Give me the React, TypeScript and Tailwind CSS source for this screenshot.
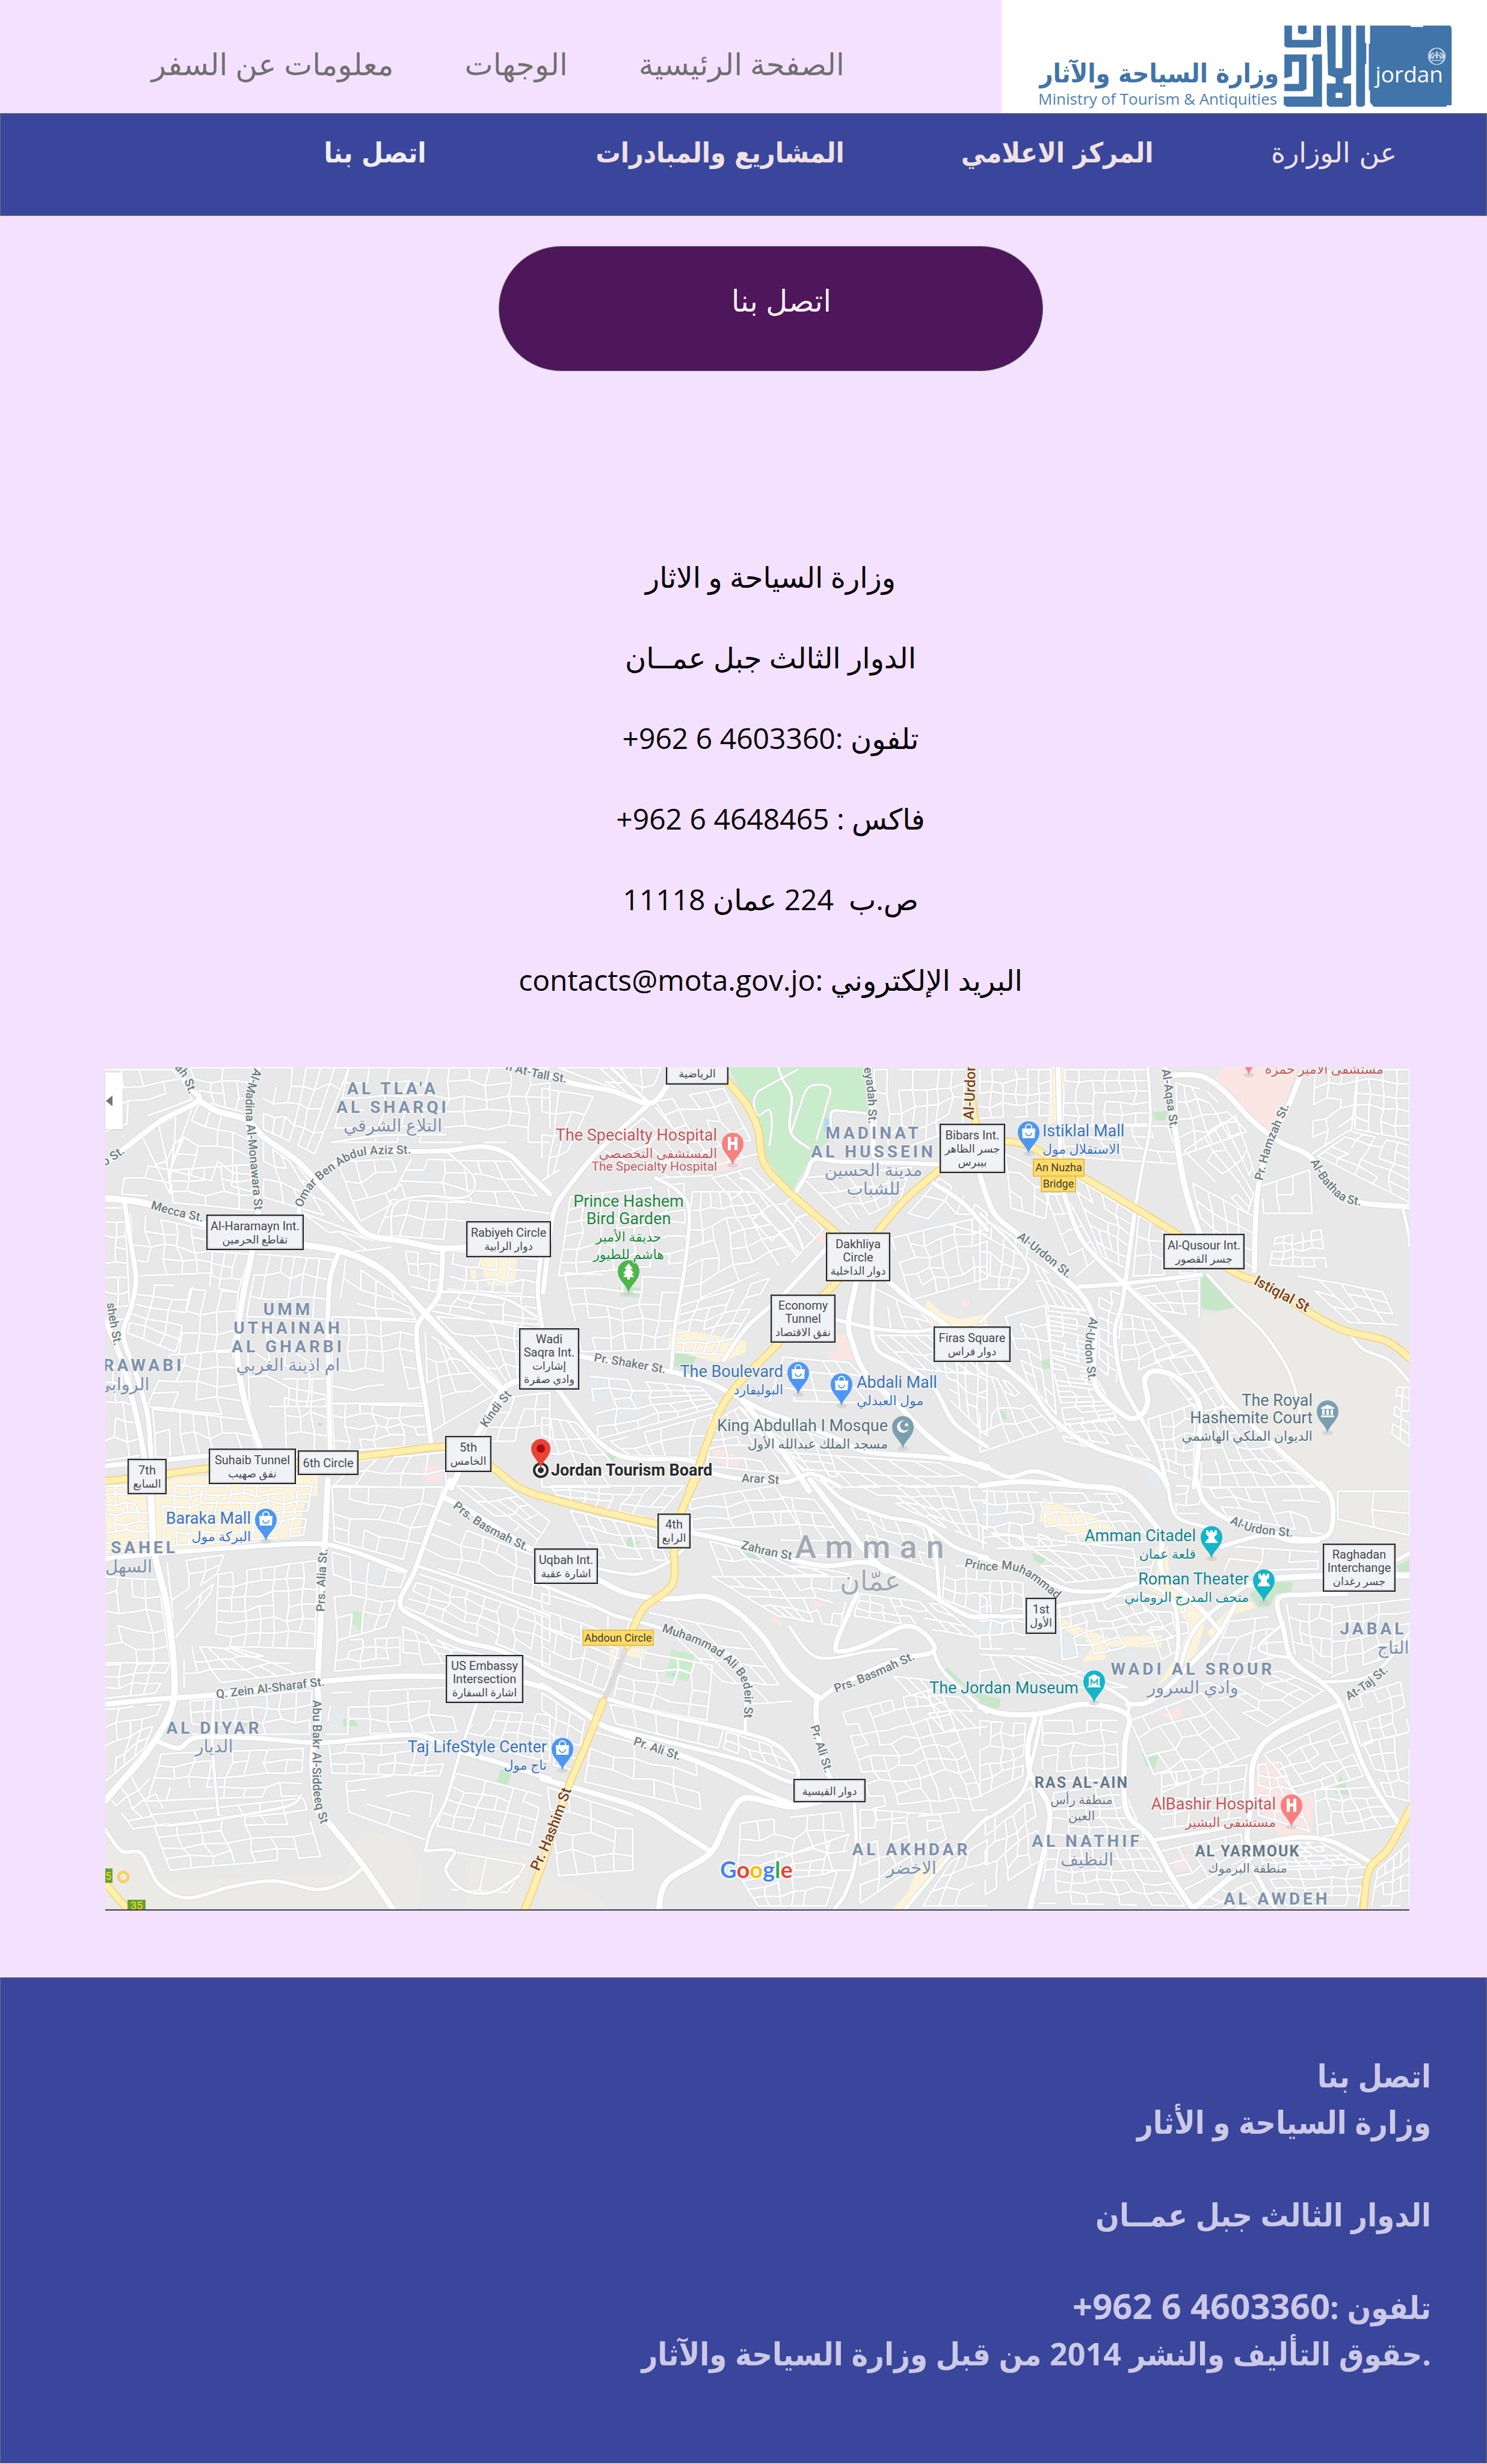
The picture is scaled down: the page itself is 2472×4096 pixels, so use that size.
import type { ReactNode } from "react";

type Point = [number, number];
type Sheet = "A1" | "B1" | "C1" | "A2" | "B2" | "C2";

const SHEETS: Record<Sheet, { x: number; y: number; sx: number; sy: number }> = {
  A1: { x: -1, y: -10, sx: 0.4721, sy: 0.4516 },
  B1: { x: 726, y: -10, sx: 0.4721, sy: 0.4516 },
  C1: { x: 1454, y: -10, sx: 0.4721, sy: 0.4516 },
  A2: { x: -1, y: 691, sx: 0.4721, sy: 0.4598 },
  B2: { x: 726, y: 691, sx: 0.4721, sy: 0.4598 },
  C2: { x: 1454, y: 691, sx: 0.4721, sy: 0.4598 },
};

const project = (s: Sheet, [x, y]: Point): Point => [
  Math.round(SHEETS[s].x + x * SHEETS[s].sx),
  Math.round(SHEETS[s].y + y * SHEETS[s].sy),
];

const parse = (list: string): Point[] =>
  list.split(" ").map((pair) => pair.split(",").map(Number) as Point);

/* Catmull-Rom spline through the given points */
const curve = (p: Point[]) => {
  let d = `M${p[0][0]} ${p[0][1]}`;
  for (let i = 0; i < p.length - 1; i++) {
    const a = p[i - 1] ?? p[i];
    const b = p[i];
    const c = p[i + 1];
    const e = p[i + 2] ?? c;
    d += `C${b[0] + (c[0] - a[0]) / 6} ${b[1] + (c[1] - a[1]) / 6} ${c[0] - (e[0] - b[0]) / 6} ${c[1] - (e[1] - b[1]) / 6} ${c[0]} ${c[1]}`;
  }
  return d;
};
const roadPath = (s: Sheet, list: string) => curve(parse(list).map((p) => project(s, p)));
const areaPath = (s: Sheet, list: string) =>
  "M" + parse(list).map((p) => project(s, p).join(" ")).join("L") + "Z";

/* Neighbourhood streets: four corners, then the number of columns and rows */
const noise = (n: number) => {
  const v = Math.sin(n * 12.9898) * 43758.5453;
  return v - Math.floor(v);
};
const blockPath = (s: Sheet, q: number[], seed: number) => {
  const [x1, y1, x2, y2, x3, y3, x4, y4, cols, rows] = q;
  const node = (i: number, j: number): string => {
    const edge = i === 0 || j === 0 || i === cols || j === rows;
    const k = seed * 101 + i * 17 + j * 31;
    const u = i / cols + (edge ? 0 : ((noise(k) - 0.5) * 0.35) / cols);
    const v = j / rows + (edge ? 0 : ((noise(k + 5) - 0.5) * 0.5) / rows);
    const x = (1 - u) * (1 - v) * x1 + u * (1 - v) * x2 + u * v * x3 + (1 - u) * v * x4;
    const y = (1 - u) * (1 - v) * y1 + u * (1 - v) * y2 + u * v * y3 + (1 - u) * v * y4;
    return project(s, [x, y]).join(" ");
  };
  let d = "";
  for (let i = 0; i <= cols; i++)
    for (let j = 0; j <= rows; j++) {
      if (i < cols && noise(seed * 7 + i * 3.1 + j * 5.7) > 0.12) d += `M${node(i, j)}L${node(i + 1, j)}`;
      if (j < rows && noise(seed * 9 + i * 4.3 + j * 2.9) > 0.22) d += `M${node(i, j)}L${node(i, j + 1)}`;
    }
  return d;
};

const AREAS: [Sheet, string, string][] = [
  ["B1", "#c9edcb", "655,20 1130,20 1160,190 1020,180 1012,290 950,350 880,480 845,440 780,340 740,190"],
  ["C1", "#ebeae6", "850,780 940,775 1040,850 1280,1010 1440,1100 1513,1200 1513,1600 1210,1600 1000,1385 860,1230 765,1060 780,940 900,905"],
  ["C2", "#ebeae6", "1200,-20 1520,-20 1520,250 1240,190 1240,60"],
  ["C1", "#c7e7c8", "780,785 800,780 905,905 830,922 780,910"],
  ["C1", "#c7e7c8", "610,188 665,182 650,220 615,218"],
  ["C1", "#c7e7c8", "215,1105 262,1090 265,1125 220,1135"],
  ["C1", "#c7e7c8", "65,1283 92,1295 95,1325 75,1310"],
  ["C1", "#fbe6e4", "860,20 1120,20 1040,258 990,250 930,190 822,70"],
  ["C1", "#fbe6e4", "408,705 442,680 436,728"],
  ["C1", "#fcf4da", "245,20 300,20 295,210 240,235"],
  ["C1", "#e5eaee", "100,960 150,950 168,1040 150,1045"],
  ["C1", "#e5eaee", "565,1500 600,1490 650,1560 600,1568"],
  ["B1", "#fbe6e4", "958,655 1000,620 1000,685"],
  ["B1", "#fbe6e4", "1035,1010 1070,1005 1100,1100 1010,1100 1010,1070 1045,1070"],
  ["B1", "#fbe6e4", "605,1425 702,1455 690,1495 595,1470"],
  ["B1", "#fbe6e4", "600,360 700,345 710,385 620,405"],
  ["B1", "#fbe6e4", "1478,880 1505,880 1495,905 1478,900"],
  ["B1", "#c7e7c8", "470,1065 545,1090 520,1150 465,1120"],
  ["B1", "#c7e7c8", "272,830 345,835 340,870 275,865"],
  ["B1", "#c7e7c8", "215,1460 235,1440 262,1455 250,1475"],
  ["B1", "#fcf4da", "450,980 720,1030 715,1075 620,1110 440,1060"],
  ["B1", "#fcf4da", "1360,880 1410,930 1470,950 1568,930 1568,1000 1400,980 1330,940"],
  ["B1", "#e5eaee", "175,1170 245,1150 250,1200 215,1260 175,1230"],
  ["B1", "#e5eaee", "275,1240 365,1260 350,1320 245,1290"],
  ["B1", "#e5eaee", "1360,590 1430,610 1420,640 1365,625"],
  ["B1", "#e5eaee", "1380,1110 1440,1110 1400,1200 1345,1150"],
  ["B1", "#aed8fb", "995,210 1010,212 1008,262 994,262"],
  ["A1", "#fcf4da", "1320,725 1450,725 1445,825 1350,825 1330,770"],
  ["A1", "#fcf4da", "1285,770 1305,765 1310,822 1298,825"],
  ["A1", "#fcf4da", "250,1530 750,1510 750,1600 150,1600"],
  ["A1", "#fbe6e4", "1120,1480 1190,1500 1185,1550 1120,1540"],
  ["A1", "#aed8fb", "753,1333 765,1333 765,1342 753,1342"],
  ["A2", "#fcf4da", "0,-10 735,-10 700,95 690,195 250,250 0,275"],
  ["A2", "#c9edcb", "873,462 925,475 895,535 873,505"],
  ["A2", "#c7e7c8", "838,855 880,855 893,878 840,880"],
  ["A2", "#c7e7c8", "482,857 502,855 502,880 490,880"],
  ["A2", "#c7e7c8", "1395,1035 1435,1045 1420,1095 1380,1085"],
  ["A2", "#e5eaee", "905,330 950,335 940,400 902,395"],
  ["A2", "#e5eaee", "558,790 592,790 590,835 560,830"],
  ["A2", "#e5eaee", "803,820 845,825 825,885 803,890"],
  ["A2", "#ebeae6", "0,1300 150,1345 200,1440 600,1425 850,1420 890,1290 940,1260 1060,1290 1120,1400 1100,1540 0,1540"],
  ["A2", "#ebeae6", "1290,1360 1360,1340 1500,1340 1480,1540 1270,1540"],
  ["B2", "#ebeae6", "-10,1410 180,1480 240,1540 -10,1540"],
  ["B2", "#c9edcb", "455,602 535,622 515,718 437,700"],
  ["B2", "#aed8fb", "460,688 478,690 477,700 460,698"],
  ["B2", "#c7e7c8", "307,185 328,185 328,212 348,212 320,242 295,230"],
  ["B2", "#c7e7c8", "718,252 778,268 775,288 715,272"],
  ["B2", "#c7e7c8", "1425,665 1500,740 1568,770 1568,810 1480,730 1420,680"],
  ["B2", "#fbe6e4", "812,480 830,478 850,520 810,500"],
  ["B2", "#fbe6e4", "960,425 982,430 978,447 958,445"],
  ["B2", "#fbe6e4", "1455,1140 1478,1155 1465,1170 1448,1158"],
  ["B2", "#e5eaee", "1505,490 1568,490 1568,545 1505,530"],
  ["B2", "#fcf4da", "240,600 270,590 255,660 238,665"],
  ["B2", "#fcf4da", "300,595 370,600 360,640 290,620"],
  ["B2", "#fcf4da", "1420,1340 1460,1330 1270,1540 1235,1540"],
  ["B2", "#fcf4da", "1330,1380 1420,1385 1330,1470 1290,1470"],
  ["C2", "#fcf4da", "220,55 440,140 465,160 455,235 210,140"],
  ["C2", "#fcf4da", "550,330 660,330 720,390 800,480 760,620 620,740 700,620 740,520 670,420 560,370"],
  ["C2", "#fcf4da", "270,480 390,540 460,560 640,550 640,595 450,590 440,640 360,645 400,590 280,520"],
  ["C2", "#fcf4da", "620,230 660,230 665,330 620,330"],
  ["C2", "#fcf4da", "900,430 960,430 970,450 880,480 820,570 800,540"],
  ["C2", "#ebe7e2", "720,160 780,150 850,250 990,240 985,290 830,310 720,300"],
  ["C2", "#c7e7c8", "950,400 1010,370 1050,358 1100,358 1098,395 1040,400 1020,445 980,450"],
  ["C2", "#c7e7c8", "185,255 235,275 215,295 190,280"],
  ["C2", "#c7e7c8", "0,765 75,780 65,815 0,805"],
  ["C2", "#c7e7c8", "1465,300 1520,275 1520,320 1475,320"],
  ["C2", "#c7e7c8", "570,975 630,990 615,1035 585,1025"],
  ["C2", "#c7e7c8", "1268,1055 1310,1130 1250,1120"],
  ["C2", "#fbe6e4", "640,840 700,810 715,835 690,858"],
  ["C2", "#fbe6e4", "970,1010 1040,1000 1070,1080 1130,1135 1175,1130 1168,1270 1060,1280 965,1150"],
  ["C2", "#fbe6e4", "680,1360 740,1340 725,1400 685,1390"],
  ["C2", "#e5eaee", "10,60 95,65 80,150 10,140"],
  ["C2", "#e5eaee", "290,550 375,560 360,625 285,615"],
  ["C2", "#e5eaee", "0,490 75,495 60,565 0,550"],
  ["C2", "#e5eaee", "515,605 555,610 550,670 510,650"],
];

const BLOCKS: [Sheet, number[]][] = [
  ["A1", [0, 30, 240, 30, 310, 140, 0, 260, 4, 3]],
  ["A1", [300, 25, 530, 25, 500, 190, 350, 150, 4, 3]],
  ["A1", [560, 25, 860, 25, 740, 340, 560, 250, 6, 4]],
  ["A1", [860, 25, 1568, 25, 1568, 300, 800, 300, 10, 5]],
  ["A1", [330, 160, 500, 225, 520, 480, 230, 400, 4, 4]],
  ["A1", [130, 270, 310, 170, 230, 400, 230, 490, 3, 2]],
  ["A1", [80, 370, 230, 400, 240, 500, 60, 490, 2, 2]],
  ["A1", [240, 400, 520, 380, 530, 550, 240, 520, 5, 3]],
  ["A1", [560, 300, 680, 390, 840, 590, 560, 500, 4, 3]],
  ["A1", [700, 560, 930, 650, 1050, 680, 880, 700, 4, 2]],
  ["A1", [820, 370, 1010, 360, 1060, 500, 900, 590, 3, 3]],
  ["A1", [1080, 360, 1430, 370, 1568, 560, 1020, 480, 6, 3]],
  ["A1", [1010, 510, 1270, 520, 1270, 660, 960, 640, 4, 2]],
  ["A1", [90, 560, 360, 620, 380, 780, 110, 790, 5, 4]],
  ["A1", [380, 700, 510, 710, 470, 850, 370, 830, 3, 3]],
  ["A1", [110, 820, 310, 830, 250, 1070, 80, 1000, 3, 5]],
  ["A1", [300, 840, 470, 850, 450, 1060, 260, 1080, 3, 3]],
  ["A1", [540, 710, 800, 730, 780, 950, 500, 940, 6, 3]],
  ["A1", [850, 730, 1060, 880, 1100, 960, 820, 940, 4, 3]],
  ["A1", [800, 940, 1090, 950, 1130, 1260, 800, 1260, 5, 5]],
  ["A1", [500, 950, 780, 1150, 780, 1270, 510, 1270, 4, 3]],
  ["A1", [630, 1170, 780, 1170, 785, 1450, 640, 1440, 3, 4]],
  ["A1", [800, 1260, 1140, 1270, 1150, 1410, 810, 1440, 7, 4]],
  ["A1", [170, 1280, 500, 1320, 540, 1440, 180, 1460, 7, 2]],
  ["A1", [230, 1080, 450, 1070, 500, 1310, 150, 1270, 4, 4]],
  ["A1", [0, 1110, 90, 1150, 130, 1450, 0, 1470, 3, 5]],
  ["A1", [0, 540, 70, 540, 90, 950, 0, 950, 2, 8]],
  ["A1", [1060, 700, 1190, 710, 1170, 850, 1080, 830, 3, 3]],
  ["A1", [1200, 850, 1520, 870, 1530, 990, 1150, 920, 6, 3]],
  ["A1", [1170, 940, 1540, 970, 1470, 1170, 1400, 1190, 4, 4]],
  ["A1", [1130, 1000, 1220, 1060, 1370, 1230, 1140, 1370, 4, 4]],
  ["A1", [1400, 1240, 1568, 1220, 1568, 1400, 1320, 1400, 4, 3]],
  ["A1", [900, 1470, 1200, 1440, 1200, 1568, 800, 1568, 5, 2]],
  ["A1", [1230, 700, 1530, 730, 1520, 860, 1210, 840, 6, 3]],
  ["B1", [0, 100, 180, 130, 60, 400, 0, 440, 3, 4]],
  ["B1", [60, 25, 420, 25, 370, 150, 260, 105, 5, 2]],
  ["B1", [400, 150, 640, 100, 760, 340, 560, 400, 4, 5]],
  ["B1", [220, 330, 400, 170, 600, 420, 400, 430, 4, 3]],
  ["B1", [600, 430, 780, 380, 990, 620, 880, 740, 4, 4]],
  ["B1", [100, 500, 500, 450, 510, 740, 60, 790, 7, 6]],
  ["B1", [530, 480, 720, 480, 900, 720, 490, 900, 6, 6]],
  ["B1", [80, 780, 490, 800, 450, 1060, 140, 1070, 6, 5]],
  ["B1", [490, 900, 800, 800, 640, 1080, 460, 1070, 5, 5]],
  ["B1", [1170, 30, 1490, 30, 1480, 240, 1180, 360, 7, 4]],
  ["B1", [920, 430, 1300, 390, 1260, 510, 1080, 600, 5, 3]],
  ["B1", [1230, 650, 1568, 570, 1568, 800, 1300, 880, 6, 5]],
  ["B1", [1400, 430, 1568, 560, 1568, 640, 1290, 560, 4, 2]],
  ["B1", [1160, 830, 1330, 920, 1400, 1000, 1170, 980, 4, 2]],
  ["B1", [1180, 1010, 1400, 1010, 1568, 1160, 1300, 1130, 5, 2]],
  ["B1", [850, 1090, 1080, 1110, 1230, 1260, 800, 1250, 5, 3]],
  ["B1", [170, 1160, 560, 1200, 620, 1270, 200, 1390, 6, 5]],
  ["B1", [240, 1400, 600, 1300, 560, 1460, 310, 1450, 6, 2]],
  ["B1", [700, 1280, 1000, 1390, 1040, 1530, 900, 1520, 5, 3]],
  ["B1", [600, 1330, 700, 1270, 870, 1520, 580, 1490, 4, 5]],
  ["B1", [1400, 1000, 1568, 970, 1568, 1380, 1440, 1250, 4, 6]],
  ["B1", [0, 1310, 120, 1330, 320, 1568, 0, 1568, 4, 4]],
  ["B1", [850, 1440, 1400, 1480, 1568, 1568, 1000, 1568, 6, 2]],
  ["C1", [0, 30, 250, 30, 250, 200, 0, 210, 6, 4]],
  ["C1", [300, 30, 590, 30, 600, 230, 290, 240, 6, 5]],
  ["C1", [290, 240, 660, 240, 710, 380, 300, 350, 6, 3]],
  ["C1", [690, 80, 800, 110, 940, 260, 700, 350, 4, 4]],
  ["C1", [720, 330, 900, 200, 980, 450, 940, 560, 5, 4]],
  ["C1", [750, 450, 960, 570, 960, 760, 790, 640, 4, 3]],
  ["C1", [90, 340, 250, 420, 230, 580, 110, 540, 3, 3]],
  ["C1", [230, 490, 300, 490, 420, 720, 340, 790, 2, 4]],
  ["C1", [320, 420, 540, 560, 510, 760, 430, 720, 4, 5]],
  ["C1", [560, 570, 730, 660, 760, 780, 540, 790, 4, 3]],
  ["C1", [0, 560, 170, 690, 130, 840, 0, 840, 4, 4]],
  ["C1", [160, 720, 270, 800, 370, 920, 240, 900, 4, 2]],
  ["C1", [240, 900, 390, 920, 400, 1120, 250, 1080, 3, 10]],
  ["C1", [250, 1090, 400, 1140, 480, 1310, 300, 1340, 3, 12]],
  ["C1", [90, 940, 230, 900, 270, 1300, 170, 1180, 3, 6]],
  ["C1", [540, 840, 770, 800, 770, 940, 640, 920, 3, 3]],
  ["C1", [500, 930, 640, 960, 740, 1060, 500, 1160, 4, 4]],
  ["C1", [620, 1100, 760, 1080, 860, 1260, 790, 1320, 3, 3]],
  ["C1", [420, 830, 500, 860, 480, 1180, 420, 1130, 2, 8]],
  ["C1", [780, 1290, 870, 1270, 1180, 1568, 780, 1568, 6, 6]],
  ["C1", [590, 1320, 760, 1260, 750, 1540, 640, 1500, 4, 5]],
  ["C1", [0, 1150, 100, 1180, 260, 1350, 0, 1440, 5, 4]],
  ["C1", [270, 1340, 480, 1320, 600, 1470, 300, 1400, 5, 3]],
  ["C1", [1180, 40, 1330, 30, 1310, 250, 1170, 340, 3, 5]],
  ["C1", [1330, 30, 1513, 30, 1513, 290, 1320, 250, 4, 5]],
  ["C1", [1190, 350, 1310, 260, 1513, 310, 1513, 520, 5, 5]],
  ["C1", [990, 460, 1160, 400, 1170, 560, 1000, 560, 3, 2]],
  ["C1", [1040, 650, 1200, 620, 1220, 760, 1020, 750, 5, 4]],
  ["C1", [1120, 790, 1420, 850, 1470, 970, 1300, 960, 4, 3]],
  ["C1", [1470, 1200, 1513, 1200, 1513, 1420, 1450, 1370, 2, 5]],
  ["A2", [0, 10, 150, 10, 160, 240, 0, 250, 4, 7]],
  ["A2", [200, 10, 730, 10, 700, 190, 210, 230, 11, 6]],
  ["A2", [0, 340, 190, 350, 230, 650, 0, 650, 4, 5]],
  ["A2", [220, 290, 420, 260, 370, 400, 250, 560, 3, 4]],
  ["A2", [400, 330, 750, 280, 740, 600, 390, 590, 7, 6]],
  ["A2", [280, 590, 470, 600, 740, 680, 280, 740, 7, 3]],
  ["A2", [800, 10, 1190, 20, 1100, 290, 810, 210, 6, 4]],
  ["A2", [800, 250, 1060, 330, 990, 520, 820, 570, 4, 4]],
  ["A2", [820, 570, 1040, 560, 1040, 660, 810, 680, 5, 3]],
  ["A2", [1050, 520, 1250, 600, 1400, 640, 1050, 660, 5, 3]],
  ["A2", [1110, 330, 1568, 490, 1568, 660, 1060, 450, 8, 4]],
  ["A2", [1160, 130, 1560, 280, 1568, 440, 1110, 290, 7, 3]],
  ["A2", [1240, 10, 1420, 20, 1568, 140, 1510, 230, 4, 4]],
  ["A2", [0, 660, 230, 650, 180, 760, 0, 780, 4, 3]],
  ["A2", [0, 820, 200, 800, 140, 960, 0, 1080, 4, 4]],
  ["A2", [300, 790, 730, 750, 720, 910, 310, 910, 8, 3]],
  ["A2", [800, 760, 1200, 740, 1240, 900, 780, 910, 6, 3]],
  ["A2", [790, 950, 1220, 930, 1180, 1060, 800, 1050, 7, 3]],
  ["A2", [850, 1080, 1170, 1040, 1130, 1290, 860, 1190, 4, 3]],
  ["A2", [200, 980, 700, 960, 690, 1130, 150, 1150, 8, 4]],
  ["A2", [160, 1200, 700, 1140, 760, 1350, 230, 1400, 7, 5]],
  ["A2", [20, 1140, 130, 1020, 230, 1230, 100, 1250, 3, 4]],
  ["A2", [1240, 1050, 1540, 1130, 1500, 1310, 1170, 1240, 6, 4]],
  ["A2", [1330, 820, 1568, 840, 1568, 1010, 1260, 930, 5, 4]],
  ["A2", [1210, 1330, 1480, 1380, 1420, 1480, 1220, 1470, 2, 1]],
  ["B2", [30, 10, 500, 10, 400, 130, 60, 60, 8, 3]],
  ["B2", [100, 100, 400, 170, 440, 280, 180, 270, 6, 3]],
  ["B2", [520, 60, 820, 10, 900, 150, 530, 170, 5, 3]],
  ["B2", [590, 210, 900, 290, 1080, 330, 640, 340, 6, 2]],
  ["B2", [600, 340, 1090, 340, 1050, 520, 830, 480, 7, 4]],
  ["B2", [840, 50, 960, 60, 1100, 260, 840, 260, 3, 4]],
  ["B2", [1080, 70, 1340, 160, 1390, 310, 1170, 250, 5, 3]],
  ["B2", [1120, 10, 1568, 10, 1568, 220, 1370, 140, 7, 4]],
  ["B2", [1120, 400, 1400, 440, 1540, 560, 1100, 480, 8, 3]],
  ["B2", [1420, 300, 1568, 300, 1568, 480, 1410, 420, 4, 3]],
  ["B2", [0, 400, 310, 490, 280, 640, 0, 520, 4, 2]],
  ["B2", [0, 520, 270, 600, 220, 750, 0, 660, 5, 2]],
  ["B2", [290, 600, 600, 660, 580, 860, 250, 790, 5, 4]],
  ["B2", [380, 470, 700, 540, 880, 790, 720, 800, 4, 4]],
  ["B2", [240, 800, 640, 890, 620, 960, 260, 870, 5, 1]],
  ["B2", [180, 900, 540, 1000, 560, 1180, 150, 1080, 5, 3]],
  ["B2", [650, 900, 840, 960, 890, 1050, 640, 960, 5, 2]],
  ["B2", [0, 760, 150, 860, 120, 1040, 0, 1010, 3, 4]],
  ["B2", [20, 1100, 320, 1200, 320, 1400, 60, 1420, 4, 4]],
  ["B2", [1060, 830, 1400, 740, 1568, 1180, 1180, 1220, 8, 9]],
  ["B2", [1240, 700, 1420, 720, 1568, 880, 1420, 900, 4, 3]],
  ["B2", [700, 1230, 1050, 1190, 1090, 1400, 690, 1400, 6, 3]],
  ["B2", [690, 1410, 1080, 1270, 1000, 1530, 760, 1530, 6, 4]],
  ["B2", [1120, 1180, 1400, 1200, 1430, 1310, 1120, 1520, 5, 5]],
  ["B2", [1440, 1370, 1568, 1290, 1568, 1530, 1340, 1530, 4, 3]],
  ["C2", [10, 30, 480, 40, 600, 210, 10, 240, 12, 5]],
  ["C2", [40, 180, 620, 250, 600, 330, 300, 360, 7, 3]],
  ["C2", [0, 350, 150, 360, 160, 600, 0, 600, 4, 5]],
  ["C2", [280, 450, 540, 400, 680, 560, 290, 640, 7, 5]],
  ["C2", [560, 400, 720, 430, 740, 580, 640, 640, 3, 4]],
  ["C2", [690, 10, 780, 10, 770, 110, 690, 110, 2, 3]],
  ["C2", [810, 20, 1180, 10, 1230, 190, 870, 120, 6, 3]],
  ["C2", [1260, 30, 1513, 30, 1513, 190, 1260, 130, 2, 2]],
  ["C2", [900, 230, 1190, 250, 1190, 310, 860, 320, 3, 2]],
  ["C2", [0, 620, 200, 630, 520, 740, 0, 740, 6, 2]],
  ["C2", [880, 500, 1060, 480, 1090, 620, 800, 680, 4, 3]],
  ["C2", [1080, 440, 1240, 440, 1240, 690, 1110, 620, 4, 4]],
  ["C2", [1240, 450, 1513, 420, 1513, 600, 1240, 700, 5, 4]],
  ["C2", [1290, 780, 1480, 720, 1513, 900, 1340, 950, 4, 4]],
  ["C2", [1350, 940, 1513, 900, 1513, 1150, 1430, 1130, 3, 4]],
  ["C2", [760, 730, 1060, 680, 1210, 750, 1010, 880, 6, 3]],
  ["C2", [530, 860, 780, 760, 960, 980, 640, 1120, 6, 4]],
  ["C2", [640, 1050, 940, 1020, 920, 1210, 640, 1250, 6, 4]],
  ["C2", [1000, 980, 1260, 860, 1350, 1060, 1120, 1130, 5, 5]],
  ["C2", [1180, 1110, 1380, 1100, 1470, 1240, 1190, 1280, 5, 4]],
  ["C2", [980, 1020, 1060, 1010, 1160, 1260, 980, 1200, 3, 5]],
  ["C2", [220, 860, 480, 860, 490, 1070, 220, 1080, 5, 5]],
  ["C2", [0, 860, 160, 870, 150, 1060, 0, 1130, 4, 5]],
  ["C2", [260, 1120, 500, 1090, 580, 1290, 250, 1270, 5, 5]],
  ["C2", [20, 1220, 180, 1100, 220, 1360, 20, 1490, 5, 5]],
  ["C2", [240, 1320, 590, 1320, 720, 1530, 210, 1520, 9, 5]],
  ["C2", [640, 1330, 920, 1270, 930, 1360, 720, 1470, 5, 3]],
  ["C2", [980, 1300, 1200, 1300, 1340, 1380, 1000, 1390, 8, 5]],
  ["C2", [1000, 1400, 1360, 1390, 1330, 1530, 1080, 1530, 6, 4]],
  ["C2", [770, 1530, 930, 1400, 1010, 1530, 900, 1540, 4, 3]],
  ["C2", [1400, 1400, 1513, 1300, 1513, 1530, 1380, 1530, 4, 4]],
];

const ROADS: [Sheet, number, string][] = [
  ["A1", 9, "250,0 290,90 330,145 200,220 60,330 -10,390"],
  ["A1", 10, "330,145 400,185 500,215 560,280 680,370 780,480 860,570 930,640 1050,662 1180,688 1290,685"],
  ["A1", 10, "545,20 510,100 505,210 525,400 540,560 520,700 490,850 468,1000 470,1120 500,1280 550,1430"],
  ["A1", 11, "0,505 150,525 350,600 520,640 700,675 850,705 980,770 1060,850 1130,930 1250,1060 1400,1210"],
  ["A1", 10, "1480,1170 1400,1210 1330,1340 1290,1420 1220,1570"],
  ["A1", 8, "685,590 690,500 740,440 830,360 920,335 1040,332 1200,330 1330,315 1420,340 1480,400 1568,490"],
  ["A1", 8, "1130,930 1180,850 1190,690"],
  ["A1", 8, "1130,930 1100,980 1105,1100 1130,1250 1150,1410"],
  ["A1", 8, "825,705 795,800 785,950 790,1250 795,1430"],
  ["A1", 8, "70,520 90,650 110,800 95,900 65,1010 110,1150 150,1300 165,1480"],
  ["A1", 9, "0,950 60,1100 110,1300 140,1460"],
  ["A1", 8, "0,1490 150,1475 400,1450 680,1450"],
  ["A1", 7, "1535,720 1525,850 1545,1000"],
  ["A1", 4, "800,300 960,275 1100,270 1200,270"],
  ["A1", 4, "1200,330 1300,430 1270,500 1130,495 1020,530 1010,650"],
  ["A1", 5, "1180,848 1300,855 1420,880 1520,940"],
  ["B1", 9, "0,40 100,80 250,110 380,155 440,90"],
  ["B1", 8, "380,155 200,330 90,470 40,560 20,720 5,850"],
  ["B1", 6, "380,155 300,80 240,20"],
  ["B1", 4, "830,20 850,70 880,130 875,260 940,320"],
  ["B1", 3, "880,260 905,180 940,95 1012,98 1000,170 965,290"],
  ["B1", 3, "760,110 745,150 760,200 800,180 810,240 800,310"],
  ["B1", 3, "760,110 830,70 900,30"],
  ["B1", 4, "1160,195 1080,185 1020,185 1018,250"],
  ["B1", 8, "1155,20 1160,200 1170,350"],
  ["B1", 7, "1410,380 1250,375 1050,370 960,360 930,420 890,490"],
  ["B1", 7, "1000,690 850,860 720,980 640,1100"],
  ["B1", 9, "1110,800 1080,950 1090,1030 1140,1150 1250,1260 1350,1370 1450,1450 1568,1500"],
  ["B1", 7, "1170,820 1160,950 1180,1060 1280,1120 1380,1200 1450,1330 1568,1420"],
  ["B1", 9, "1220,810 1320,900 1420,970 1568,1110"],
  ["B1", 6, "1030,950 1180,985 1330,995 1420,970"],
  ["B1", 8, "130,1085 250,1110 440,1140 580,1180 660,1220 790,1290 900,1330 1060,1400 1150,1440 1400,1460 1568,1490"],
  ["B1", 8, "50,1200 120,1300 200,1400 300,1460 500,1465 560,1490"],
  ["B1", 7, "560,1500 650,1530 850,1550 950,1520 1050,1568"],
  ["B1", 10, "690,1230 770,1330 850,1440 940,1580"],
  ["B1", 6, "400,430 480,480 520,560 500,780 470,960 455,1130"],
  ["B1", 5, "700,430 740,450 880,600 920,690"],
  ["B1", 8, "1380,450 1480,520 1568,620"],
  ["C1", 8, "275,20 280,200 285,400 295,480 350,640 420,730 505,815 620,930 760,1070 860,1230 1000,1380 1210,1575"],
  ["C1", 10, "650,20 680,200 710,400 740,530 780,650"],
  ["C1", 9, "680,50 780,55 860,110 960,220 1060,300 1160,350 1250,470 1340,520 1513,535"],
  ["C1", 9, "1130,50 1080,180 1020,300 980,460 970,600 965,770"],
  ["C1", 9, "0,420 50,560 150,650 280,780 370,880 405,980 400,1130 420,1220 520,1310 570,1300 590,1250 580,1170 620,1140 700,1170 770,1260 770,1400 755,1568"],
  ["C1", 7, "350,830 500,820 780,785"],
  ["C1", 7, "545,560 520,760 500,900 475,1000 500,1180 560,1300 620,1420 660,1568"],
  ["C1", 8, "0,1040 70,1110 180,1210 260,1320 400,1420 600,1490 660,1568"],
  ["C1", 7, "0,1480 100,1530 200,1510 350,1560 500,1580"],
  ["C1", 5, "590,20 600,230 570,400 540,580"],
  ["C1", 5, "800,785 900,900 1000,1000 1090,1150 1130,1300"],
  ["C1", 5, "0,960 80,880 170,780 130,690 0,560"],
  ["C1", 5, "1300,1000 1350,1060 1440,1100 1513,1180"],
  ["C1", 5, "1490,540 1510,640 1513,680"],
  ["A2", 11, "160,0 175,250 220,450 245,700 230,830 150,970 60,1080 0,1150"],
  ["A2", 8, "0,275 200,255 450,235 720,220 850,240 1060,320"],
  ["A2", 10, "785,-10 775,220 760,500 750,720 755,850 730,1000 750,1180 790,1230 900,1370 1020,1550"],
  ["A2", 8, "1215,-10 1150,150 1090,320 1040,440 1120,500 1250,570 1400,610 1568,700"],
  ["A2", 9, "0,800 200,780 400,765 750,720 1000,700 1200,700 1400,705 1568,745"],
  ["A2", 8, "180,930 260,960 330,920 550,925 760,940 1000,915 1120,915 1250,970 1380,1010 1568,1070"],
  ["A2", 9, "1190,50 1300,110 1500,240"],
  ["A2", 5, "1100,300 1300,370 1568,480"],
  ["A2", 5, "1310,800 1250,980 1200,1150 1150,1250 1130,1330"],
  ["A2", 6, "0,1250 60,1330 130,1340 190,1450 290,1500 450,1460 600,1440 750,1470 850,1440 900,1400"],
  ["A2", 5, "385,780 380,950 400,1200"],
  ["A2", 5, "220,1240 400,1215 640,1170 690,1130"],
  ["A2", 5, "1130,1330 1230,1330 1200,1400 1260,1470 1360,1480 1460,1420"],
  ["B2", 8, "530,180 700,220 850,270 1000,300 1150,290 1300,360 1410,430 1500,480 1568,485"],
  ["B2", 10, "945,-10 1060,140 1150,260 1210,320"],
  ["B2", 7, "985,-10 1060,60 1200,120 1340,150 1450,230 1568,270"],
  ["B2", 6, "1360,160 1385,250 1400,430"],
  ["B2", 9, "100,300 200,350 300,400 450,420 580,410 680,460 780,560 860,680 960,770"],
  ["B2", 5, "200,310 330,330 440,290 520,220"],
  ["B2", 9, "970,770 965,850 990,1000 1020,1080"],
  ["B2", 8, "980,780 1050,730 1250,640 1380,610 1340,540 1270,520 1150,580 1060,610 1035,580 1110,400"],
  ["B2", 6, "1380,610 1420,690 1568,830"],
  ["B2", 6, "0,370 150,430 260,480 400,520 620,600 710,680 715,900"],
  ["B2", 7, "0,690 200,770 400,830 700,900 830,950 900,1040 880,1080 800,1050 720,1010 500,950 220,880"],
  ["B2", 9, "0,730 150,830 220,880 400,950 600,1030 780,1120 880,1160"],
  ["B2", 9, "0,1070 330,1170 480,1260 590,1330"],
  ["B2", 10, "980,1150 870,1170 720,1140 660,1200 590,1340 440,1440 410,1550"],
  ["B2", 6, "1100,1150 1105,1350 1070,1480 1030,1540"],
  ["B2", 6, "1568,1210 1450,1330 1280,1540"],
  ["B2", 5, "870,520 970,630 1150,610 1250,600"],
  ["C2", 9, "0,10 150,-5 350,10 500,30 600,130 640,200 640,320 720,400 800,480"],
  ["C2", 7, "0,270 60,290 200,340 320,390 460,390 540,370"],
  ["C2", 7, "0,480 160,480 300,440 440,420 520,370 600,370 680,430 700,560 690,640"],
  ["C2", 8, "765,-10 790,70 870,130 1000,170 1100,200 1200,200 1240,160 1240,60 1200,0"],
  ["C2", 6, "660,0 690,120 800,160"],
  ["C2", 7, "850,230 1000,190 1100,210 1190,210"],
  ["C2", 7, "950,360 800,480 740,560 700,690"],
  ["C2", 10, "950,370 1040,345 1250,335 1513,335"],
  ["C2", 8, "900,440 830,560 700,700 600,790 520,800"],
  ["C2", 7, "850,540 790,470 720,400"],
  ["C2", 8, "1290,400 1150,405 1050,420 1070,530 1100,640 1200,720 1270,800 1340,1000 1400,1120 1480,1240"],
  ["C2", 9, "0,810 80,835 210,835 370,800 520,840 510,950 515,1180 600,1280 680,1430 750,1540"],
  ["C2", 6, "430,730 520,790 520,840"],
  ["C2", 9, "195,850 170,950 180,1060 240,1160 240,1270 175,1540"],
  ["C2", 6, "215,850 185,1000 140,1130 0,1230"],
  ["C2", 9, "1270,800 1050,900 965,1000 955,1150 940,1280 950,1360 750,1540"],
  ["C2", 6, "620,1290 800,1260 940,1230"],
  ["C2", 8, "1000,1300 1130,1280 1250,1300 1390,1380"],
  ["C2", 7, "960,1390 1040,1540"],
  ["C2", 5, "1070,510 980,600 1100,635"],
  ["C2", 5, "1200,720 1340,710 1430,650 1513,540"],
  ["C2", 6, "1430,300 1513,255"],
];

const HIGHWAYS: [Sheet, string][] = [
  ["A1", "-10,1547 220,1520 365,1500 680,1480 900,1455 1050,1435 1200,1420 1300,1450 1380,1505 1450,1565 1529,1600"],
  ["B1", "650,70 720,160 760,250 780,370 850,460 1000,600 1090,680"],
  ["B1", "1568,250 1500,320 1400,400 1280,510 1180,630 1100,740 1020,830 900,950 830,1040 690,1190 620,1300 560,1470 520,1580"],
  ["B1", "1510,20 1520,200 1560,300"],
  ["C1", "90,295 170,310 270,370 400,450 560,550 700,640 900,780 1000,820 1150,920 1280,990 1430,1030 1520,1100"],
  ["B2", "-10,46 150,90 410,150"],
  ["B2", "545,-20 490,110 465,230 465,340 440,390 360,450 320,530 300,590"],
  ["B2", "215,790 150,960 90,1110 0,1380 -60,1540"],
  ["A2", "-20,1420 30,1480 90,1550"],
  ["C2", "1525,1160 1440,1320 1370,1400 1350,1550"],
];

const ROAD_NAMES: [Sheet, string, string, string?][] = [
  ["A1", "ah St.", "245,25 275,65 300,130"],
  ["A1", "Al-Madina Al-Monawara St", "528,25 500,110 498,210 510,350 528,545 530,600"],
  ["A1", "Omar Ben Abdul Aziz St.", "695,540 730,470 800,405 900,350 1060,342 1150,342"],
  ["A1", "Mecca St.", "162,542 250,570 345,592 420,610"],
  ["A1", "to St.", "-10,395 30,368 110,310"],
  ["A1", "sheh St.", "8,890 12,930 35,1060 50,1120"],
  ["A1", "n At-Tall St.", "1410,30 1500,55 1568,70 1700,90"],
  ["A1", "Kindi St", "1345,1350 1390,1285 1450,1210"],
  ["B1", "eyadah St.", "1133,25 1145,120 1150,240"],
  ["B1", "Pr. Shaker St.", "183,1105 300,1125 440,1152 520,1170"],
  ["B1", "Arar St", "703,1550 770,1553 860,1558"],
  ["B1", "Al-Urdon", "1518,218 1525,100 1525,-40", "#7f4310"],
  ["C1", "Al-Aqsa St.", "640,30 655,130 672,260"],
  ["C1", "Pr. Hamzah St.", "995,440 1030,310 1090,160 1100,120"],
  ["C1", "Al-Bathaa St.", "1163,370 1210,450 1280,515 1370,535"],
  ["C1", "Al-Urdon St.", "130,650 210,715 310,800"],
  ["C1", "Al-Urdon St.", "388,940 370,1050 385,1200"],
  ["C1", "Istiqlal St", "962,820 1050,870 1180,940", "#7f4310"],
  ["A2", "Prs. Basmah St.", "1225,90 1340,175 1500,255"],
  ["A2", "Prs. Alia St.", "775,465 778,350 785,220"],
  ["A2", "Q. Zein Al-Sharaf St.", "395,778 580,757 790,730"],
  ["A2", "Abu Bakr Al-Siddeeq St", "733,785 732,950 735,1120 760,1230 790,1280"],
  ["A2", "Pr. Hashim St", "1530,1405 1590,1260 1660,1060", "#7f4310"],
  ["B2", "Zahran St", "698,238 790,262 900,282"],
  ["B2", "Prince Muhammad St", "1488,302 1570,318 1640,314 1710,340 1810,420"],
  ["B2", "Muhammad Ali Bedeir St.", "422,538 560,590 650,650 708,730 712,850"],
  ["B2", "Prs. Basmah St.", "1035,760 1160,710 1320,635"],
  ["B2", "Pr. Ali St.", "320,945 400,975 500,1010"],
  ["B2", "Pr. Ali St.", "945,880 965,950 1000,1060"],
  ["C2", "Al-Urdon St.", "878,145 960,178 1110,195"],
  ["C2", "At-Taj St.", "1298,788 1370,740 1450,670"],
];

const DISTRICTS: [Sheet, number, number, string[]][] = [
  ["A1", 1015, 122, ["AL TLA'A", "AL SHARQI", "التلاع الشرقي"]],
  ["A1", 645, 935, ["UMM", "UTHAINAH", "AL GHARBI", "ام اذينة الغربي"]],
  ["A1", 112, 1140, ["ARAWABI"]],
  ["A1", 66, 1212, ["الروابي"]],
  ["B1", 1168, 285, ["MADINAT", "AL HUSSEIN", "مدينة الحسين", "للشباب"]],
  ["A2", 140, 255, ["SAHEL"]],
  ["A2", 84, 325, ["السهل"]],
  ["A2", 385, 907, ["AL DIYAR", "الديار"]],
  ["B2", 1300, 1347, ["AL AKHDAR", "الاخضر"]],
  ["C2", 750, 693, ["WADI AL SROUR", "وادي السرور"]],
  ["C2", 1385, 547, ["JABAL"]],
  ["C2", 1456, 617, ["التاج"]],
  ["C2", 378, 1315, ["AL NATHIF", "النظيف"]],
  ["C2", 1047, 1525, ["AL AWDEH"]],
];
const AREAS_DARK: [Sheet, number, number, string[]][] = [
  ["C2", 357, 1102, ["RAS AL-AIN", "منطقة رأس", "العين"]],
  ["C2", 943, 1350, ["AL YARMOUK", "منطقة البرموك"]],
];

/* Framed junction signs: left, top, right, bottom and the lines of text */
const SIGNS: [Sheet, number, number, number, number, string[]][] = [
  ["A1", 357, 565, 701, 695, ["Al-Haramayn Int.", "تقاطع الحرمين"]],
  ["A1", 1274, 590, 1572, 722, ["Rabiyeh Circle", "دوار الرابية"]],
  ["A1", 1460, 983, 1672, 1209, ["Wadi", "Saqra Int.", "إشارات", "وادي صقرة"]],
  ["A1", 366, 1425, 673, 1557, ["Suhaib Tunnel", "نفق صهيب"]],
  ["A1", 680, 1432, 893, 1523, ["6th Circle"]],
  ["A1", 1199, 1380, 1362, 1512, ["5th", "الخامس"]],
  ["A1", 80, 1464, 219, 1594, ["7th", "السابع"]],
  ["B1", 437, 0, 656, 87, ["الرياضية"]],
  ["B1", 1401, 231, 1630, 411, ["Bibars Int.", "جسر الظاهر", "بيبرس"]],
  ["B1", 999, 631, 1227, 811, ["Dakhliya", "Circle", "دوار الداخلية"]],
  ["B1", 804, 859, 1033, 1036, ["Economy", "Tunnel", "نفق الاقتصاد"]],
  ["B1", 1378, 976, 1650, 1108, ["Firas Square", "دوار فراس"]],
  ["C1", 646, 635, 932, 767, ["Al-Qusour Int.", "جسر القصور"]],
  ["B2", -28, 236, 198, 366, ["Uqbah Int.", "اشارة عقبة"]],
  ["B2", 407, 110, 524, 237, ["4th", "الرابع"]],
  ["B2", 886, 1069, 1139, 1155, ["دوار القيسية"]],
  ["A2", 1202, 623, 1474, 797, ["US Embassy", "Intersection", "اشارة السفارة"]],
  ["C2", 1208, 219, 1463, 394, ["Raghadan", "Interchange", "جسر رغدان"]],
  ["C2", 161, 415, 268, 546, ["1st", "الأول"]],
];

const PLATES: [Sheet, number, number, number, number, string][] = [
  ["C1", 188, 362, 367, 422, "An Nuzha"],
  ["C1", 216, 424, 337, 481, "Bridge"],
  ["B2", 143, 532, 392, 587, "Abdoun Circle"],
];

type Kind = "hospital" | "garden" | "mall" | "mosque" | "court" | "museum" | "tower";
const PIN_FILL: Record<Kind, string> = {
  hospital: "#f98080",
  garden: "#4cb648",
  mall: "#4d97f3",
  mosque: "#7a9fb1",
  court: "#7a9fb1",
  museum: "#14b5c8",
  tower: "#14b5c8",
};
const PIN_TEXT: Record<Kind, string> = {
  hospital: "#bf5a5c",
  garden: "#1d8840",
  mall: "#3d74bb",
  mosque: "#56727d",
  court: "#56727d",
  museum: "#14858f",
  tower: "#14858f",
};
const PLACES: {
  kind: Kind;
  sheet: Sheet;
  pin: Point;
  at: Point;
  anchor: "start" | "middle" | "end";
  lines: string[];
}[] = [
  { kind: "hospital", sheet: "B1", pin: [672, 383], at: [616, 292], anchor: "end", lines: ["The Specialty Hospital", "المستشفى التخصصي"] },
  { kind: "garden", sheet: "B1", pin: [306, 853], at: [305, 535], anchor: "middle", lines: ["Prince Hashem", "Bird Garden", "حديقة الأمير", "هاشم للطيور"] },
  { kind: "mall", sheet: "B1", pin: [903, 1226], at: [850, 1162], anchor: "end", lines: ["The Boulevard", "البوليفارد"] },
  { kind: "mall", sheet: "B1", pin: [1055, 1268], at: [1108, 1203], anchor: "start", lines: ["Abdali Mall", "مول العبدلي"] },
  { kind: "mosque", sheet: "B1", pin: [1270, 1426], at: [1217, 1362], anchor: "end", lines: ["King Abdullah I Mosque", "مسجد الملك عبدالله الأول"] },
  { kind: "mall", sheet: "C1", pin: [171, 340], at: [220, 276], anchor: "start", lines: ["Istiklal Mall", "الاستقلال مول"] },
  { kind: "court", sheet: "C1", pin: [1225, 1368], at: [1171, 1269], anchor: "end", lines: ["The Royal", "Hashemite Court", "الديوان الملكي الهاشمي"] },
  { kind: "mall", sheet: "A2", pin: [568, 210], at: [514, 148], anchor: "end", lines: ["Baraka Mall", "البركة مول"] },
  { kind: "mall", sheet: "B2", pin: [71, 1039], at: [16, 975], anchor: "end", lines: ["Taj LifeStyle Center", "تاج مول"] },
  { kind: "museum", sheet: "C2", pin: [402, 796], at: [348, 761], anchor: "end", lines: ["The Jordan Museum"] },
  { kind: "tower", sheet: "C2", pin: [815, 275], at: [760, 211], anchor: "end", lines: ["Amman Citadel", "قلعة عمان"] },
  { kind: "tower", sheet: "C2", pin: [1000, 431], at: [947, 368], anchor: "end", lines: ["Roman Theater", "متحف المدرج الروماني"] },
  { kind: "hospital", sheet: "C2", pin: [1098, 1243], at: [1042, 1181], anchor: "end", lines: ["AlBashir Hospital", "مستشفى البشير"] },
  { kind: "hospital", sheet: "C1", pin: [947, 52], at: [1421, 46], anchor: "end", lines: ["مستشفى الامير حمزة"] },
];

const isArabic = (text: string) => /[\u0600-\u06ff]/.test(text);

const PinGlyph = ({ kind }: { kind: Kind }) => {
  switch (kind) {
    case "hospital":
      return <path d="M-8 -47h5v8h6v-8h5v22h-5v-9h-6v9h-5z" fill="#fff" />;
    case "garden":
      return <path d="M0 -49l7 9h-4l6 8h-4l4 6h-7v4h-4v-4h-7l4-6h-4l6-8h-4z" fill="#fff" />;
    case "mall":
      return (
        <>
          <path d="M-11 -42H11L10 -26H-10Z" fill="#fff" />
          <path d="M-5 -42v-2a5 5 0 0 1 10 0v2" fill="none" stroke="#fff" strokeWidth="2" />
          <path d="M-5 -35a5 5 0 0 0 10 0" fill="none" stroke="#4d97f3" strokeWidth="2" />
        </>
      );
    case "mosque":
      return (
        <>
          <path d="M3 -46a10 10 0 1 0 7 12a8 8 0 1 1 -7 -12z" fill="#fff" />
          <path d="M6 -44l1 3h3l-2 2 1 3-3-2-3 2 1-3-2-2h3z" fill="#fff" />
        </>
      );
    case "court":
      return <path d="M0 -47L11 -42V-40H-11V-42ZM-9 -39h4v9h-4zM-2 -39h4v9h-4zM5 -39h4v9h-4zM-11 -29H11v3H-11z" fill="#fff" />;
    case "museum":
      return (
        <>
          <path d="M0 -48L11 -42H9V-28H11V-26H-11V-28H-9V-42H-11Z" fill="#fff" />
          <path d="M-5 -30V-39L0 -33L5 -39V-30" fill="none" stroke="#14b5c8" strokeWidth="2" />
        </>
      );
    case "tower":
      return <path d="M-9 -47h4v3h3v-3h4v3h3v-3h4v7l-4 3v5h3v3h2v3H-10v-3h2v-3h3v-5l-4-3z" fill="#fff" />;
  }
};

const MapText = ({
  x,
  y,
  lines,
  fill,
  anchor = "middle",
  size,
  arabicSize,
  leading,
  className = "",
}: {
  x: number;
  y: number;
  lines: string[];
  fill: string;
  anchor?: "start" | "middle" | "end";
  size: number;
  arabicSize: number;
  leading: number;
  className?: string;
}) => (
  <g fill={fill} textAnchor={anchor} stroke="#f3f3f3" strokeWidth="3" paintOrder="stroke" strokeLinejoin="round">
    {lines.map((line, i) => (
      <text
        key={i}
        x={x}
        y={y + i * leading}
        fontSize={isArabic(line) ? arabicSize : size}
        className={isArabic(line) ? "font-normal" : className}
      >
        {line}
      </text>
    ))}
  </g>
);

const MapDrawing = () => {
  const streets = BLOCKS.map(([s, q], i) => blockPath(s, q, i + 1)).join("");
  const [jx, jy] = project("A1", [1535, 1505]);
  const [gx, gy] = project("B2", [628, 1428]);
  const [ax, ay] = project("B2", [1170, 272]);
  const [hx, hy] = project("B1", [616, 403]);
  return (
    <svg
      direction="ltr"
      viewBox="0 0 2168 1400"
      className="block h-auto w-full bg-[#e8e8e8] font-[Roboto,'DejaVu_Sans',sans-serif]"
      role="img"
      aria-label="خريطة عمان"
    >
      {AREAS.map(([s, fill, list], i) => (
        <path key={i} d={areaPath(s, list)} fill={fill} />
      ))}
      <g fill="none" strokeLinecap="round" strokeLinejoin="round">
        <path d={streets} stroke="#dcdee2" strokeWidth="5" />
        <path d={streets} stroke="#fff" strokeWidth="3" />
        <g stroke="#d6d9de">
          {ROADS.map(([s, w, list], i) => (
            <path key={i} d={roadPath(s, list)} strokeWidth={w + 2} />
          ))}
        </g>
        <g stroke="#fff">
          {ROADS.map(([s, w, list], i) => (
            <path key={i} d={roadPath(s, list)} strokeWidth={w} />
          ))}
        </g>
        <path d={roadPath("B2", "300,585 260,690 215,790")} stroke="#dcdcdc" strokeWidth="9" />
        <g stroke="#f8cf68" strokeWidth="13">
          {HIGHWAYS.map(([s, list], i) => (
            <path key={i} d={roadPath(s, list)} />
          ))}
        </g>
        <g stroke="#fff0b0" strokeWidth="10">
          {HIGHWAYS.map(([s, list], i) => (
            <path key={i} d={roadPath(s, list)} />
          ))}
        </g>
        <circle cx="30" cy="1346" r="8" stroke="#f8cf68" strokeWidth="5" />
      </g>

      <g fontSize="20" className="font-medium" stroke="#f3f3f3" strokeWidth="4" paintOrder="stroke" strokeLinejoin="round">
        {ROAD_NAMES.map(([s, name, list, fill], i) => (
          <g key={i}>
            <path id={`road-${i}`} d={roadPath(s, list)} fill="none" stroke="none" />
            <text fill={fill ?? "#6b7b80"} fontSize={fill ? 24 : 20}>
              <textPath href={`#road-${i}`}>{name}</textPath>
            </text>
          </g>
        ))}
      </g>

      {DISTRICTS.map(([s, x, y, lines], i) => {
        const [px, py] = project(s, [x, y]);
        return <MapText key={i} x={px} y={py} lines={lines} fill="#7e91ab" size={28} arabicSize={29} leading={31} className="font-bold tracking-[5px]" />;
      })}
      {AREAS_DARK.map(([s, x, y, lines], i) => {
        const [px, py] = project(s, [x, y]);
        return <MapText key={i} x={px} y={py} lines={lines} fill="#66788a" size={25} arabicSize={21} leading={27} className="font-bold tracking-[2px]" />;
      })}
      <MapText x={ax} y={ay} lines={["Amman"]} fill="#a3a9b3" size={54} arabicSize={46} leading={58} className="font-medium tracking-[15px]" />
      <MapText x={ax - 6} y={ay + 54} lines={["عمّان"]} fill="#a3a9b3" size={54} arabicSize={46} leading={58} />

      {PLATES.map(([s, x1, y1, x2, y2, text], i) => {
        const [l, t] = project(s, [x1, y1]);
        const [r, b] = project(s, [x2, y2]);
        return (
          <g key={i}>
            <rect x={l} y={t} width={r - l} height={b - t} fill="#ffdc69" stroke="#e6bd48" strokeWidth="2" />
            <text x={(l + r) / 2} y={(t + b) / 2 + 6} fontSize="18" fill="#3c3a30" textAnchor="middle">
              {text}
            </text>
          </g>
        );
      })}
      {SIGNS.map(([s, x1, y1, x2, y2, lines], i) => {
        const [l, t] = project(s, [x1, y1]);
        const [r, b] = project(s, [x2, y2]);
        const first = (t + b) / 2 + 7 - (lines.length - 1) * 11;
        return (
          <g key={i}>
            <rect x={l + 1} y={t + 1} width={r - l - 2} height={b - t - 2} fill="#f1f2f5" stroke="#202124" strokeWidth="2" />
            <rect x={l + 3} y={t + 3} width={r - l - 6} height={b - t - 6} fill="none" stroke="#b9bcc0" strokeWidth="1" />
            <g textAnchor="middle" fill="#45484c">
              {lines.map((line, k) => (
                <text key={k} x={(l + r) / 2} y={first + k * 22} fontSize={isArabic(line) ? 18 : 20}>
                  {line}
                </text>
              ))}
            </g>
          </g>
        );
      })}

      {PLACES.map(({ kind, sheet, pin, at, anchor, lines }, i) => {
        const [px, py] = project(sheet, pin);
        const [tx, ty] = project(sheet, at);
        return (
          <g key={i}>
            <g transform={`translate(${px} ${py})`}>
              <ellipse cx="0" cy="0" rx="9" ry="4" fill="#c9c9c9" opacity="0.6" />
              <path d="M0 0C-3 -14 -18 -20 -18 -36A18 18 0 0 1 18 -36C18 -20 3 -14 0 0Z" fill={PIN_FILL[kind]} />
              <PinGlyph kind={kind} />
            </g>
            <MapText x={tx} y={ty} lines={lines} fill={PIN_TEXT[kind]} anchor={anchor} size={27} arabicSize={22} leading={29} />
          </g>
        );
      })}
      <MapText x={hx} y={hy} lines={["The Specialty Hospital"]} fill={PIN_TEXT.hospital} anchor="end" size={21} arabicSize={21} leading={27} />

      <circle cx={jx} cy={jy} r="11" fill="#fff" stroke="#2b2b2b" strokeWidth="4" />
      <circle cx={jx} cy={jy} r="5" fill="#2b2b2b" />
      <g transform={`translate(${jx} ${jy - 2})`}>
        <path d="M0 0C-2 -14 -16 -20 -16 -34A16 16 0 0 1 16 -34C16 -20 2 -14 0 0Z" fill="#ea4335" />
        <circle cx="0" cy="-34" r="7" fill="#a50e0e" />
      </g>
      <text x={jx + 17} y={jy + 9} fontSize="27" fill="#2b2b2b" stroke="#f6f6f6" strokeWidth="4" paintOrder="stroke" className="font-bold">
        Jordan Tourism Board
      </text>

      <rect x="0" y="1332" width="12" height="24" fill="#689f38" />
      <text x="0" y="1351" fontSize="18" fill="#ffe200">5</text>
      <rect x="37" y="1384" width="30" height="16" fill="#689f38" />
      <text x="42" y="1400" fontSize="18" fill="#ffe200">35</text>

      <text x={gx} y={gy} fontSize="38" className="font-[Lato,sans-serif] font-bold" stroke="#fff" strokeWidth="4" paintOrder="stroke">
        <tspan fill="#4285f4">G</tspan>
        <tspan fill="#ea4335">o</tspan>
        <tspan fill="#fbbc05">o</tspan>
        <tspan fill="#4285f4">g</tspan>
        <tspan fill="#34a853">l</tspan>
        <tspan fill="#ea4335">e</tspan>
      </text>
    </svg>
  );
};

const Logo = () => (
  <svg direction="ltr" viewBox="0 0 807 188" className="block h-auto w-full" role="img" aria-label="وزارة السياحة والآثار">
    <g transform="translate(-17 0) scale(0.5255 0.2381)" fill="#4174a8">
      <path d="M927 178h24v100h67V178h25v147l-20 7H935l-8-10zM970 178h27v52l-12 10-15-10z" />
      <path d="M927 380h70v240l-12 16h-58v-50h46V432h-22v100l-24 14z" />
      <path d="M1018 380h28v365H935l-10-15v-56h93V435l-5-20z" />
      <path d="M1061 178h28v298h21V178h28v345l-24 20v40h24v150l-12 12h-57l-8-15V583h28v-40l-24-20zM1089 648v36h21v-36z" fillRule="evenodd" />
      <path d="M1154 178h28v120l4 4v140l-4 10v281l-8 12h-14l-6-12z" />
      <path d="M1198 178h128v10h40v-10h86l4 20v537h-16v10h-230l-12-30v-80l-4-10V310l4-10z" />
      <g fill="none" stroke="#c4d6e8" strokeWidth="6">
        <ellipse cx="1409" cy="393" rx="25" ry="57" />
        <path d="M1392 410c-6-20 0-35 8-42M1426 410c6-20 0-35-8-42M1409 360v48M1398 410c-4-15 2-25 11-32 9 7 15 17 11 32M1393 422h32" />
      </g>
    </g>
    <text x="734" y="137" fontSize="37" textAnchor="end" fill="#fff" className="font-['Open_Sans',sans-serif]">
      jordan
    </text>
    <text x="461" y="137" fontSize="43" textAnchor="end" fill="#4174a8" className="font-['DejaVu_Sans_Condensed','DejaVu_Sans',sans-serif] font-bold">
      وزارة السياحة والآثار
    </text>
    <text x="61" y="174" fontSize="26" fill="#4f7fb0" className="font-['Open_Sans',sans-serif]">
      Ministry of Tourism &amp; Antiquities
    </text>
  </svg>
);

const ContactLine = ({ children }: { children: ReactNode }) => (
  <p className="text-center text-[48px] leading-[134px] whitespace-nowrap text-black">{children}</p>
);

export default function App() {
  return (
    <div dir="rtl" className="w-full bg-[#f3e1ff] font-['Open_Sans','DejaVu_Sans',sans-serif]">
      <header>
        <div className="flex items-stretch">
          <a href="#home" className="block w-[32.65%] shrink-0 bg-white">
            <Logo />
          </a>
          <nav aria-label="القائمة العلوية" className="flex flex-1 items-center gap-[118px] pt-6 pr-[261px] text-[50px] leading-none whitespace-nowrap text-[#707070]">
            <a href="#home">الصفحة الرئيسية</a>
            <a href="#destinations">الوجهات</a>
            <a href="#travel">معلومات عن السفر</a>
          </nav>
        </div>
        <nav
          aria-label="القائمة الرئيسية"
          className="grid h-[171px] grid-cols-[405fr_514fr_696fr_708fr] items-center border border-[#707070] bg-[#3a469c] pr-[149px] pb-10 font-['DejaVu_Sans_Condensed','DejaVu_Sans',sans-serif] text-[46px] leading-none font-bold whitespace-nowrap text-[#efe1e2]"
        >
          <a href="#about" className="font-['DejaVu_Sans',sans-serif] font-normal">عن الوزارة</a>
          <a href="#media">المركز الاعلامي</a>
          <a href="#projects">المشاريع والمبادرات</a>
          <a href="#contact" className="text-[#f0eeee]">اتصل بنا</a>
        </nav>
      </header>

      <main className="flex flex-col pt-[50px] pb-[111px]">
        <div className="flex flex-col items-center pl-[90px]">
          <button type="button" className="h-[208px] w-[905px] rounded-full border border-[#707070] bg-[#4e165b] pb-7 pl-9 text-[50px] leading-none text-[#f6f0f4]">
            اتصل بنا
          </button>
          <address className="mt-[275px] not-italic">
            <ContactLine>وزارة السياحة و الاثار</ContactLine>
            <ContactLine>الدوار الثالث جبل عمــان</ContactLine>
            <ContactLine>
              تلفون :<bdi dir="ltr">+962 6 4603360</bdi>
            </ContactLine>
            <ContactLine>
              فاكس : <bdi dir="ltr">+962 6 4648465</bdi>
            </ContactLine>
            <ContactLine>ص.ب&nbsp; 224 عمان 11118</ContactLine>
            <ContactLine>
              البريد الإلكتروني :<a href="mailto:contacts@mota.gov.jo" dir="ltr">contacts@mota.gov.jo</a>
            </ContactLine>
          </address>
        </div>

        <section aria-label="الموقع على الخريطة" className="relative mt-[78px] mr-[129px] ml-[175px] border-b-2 border-[#3a3a44]">
          <MapDrawing />
          <button type="button" aria-label="طي اللوحة" className="absolute top-[9px] left-0 flex h-[94px] w-[29px] items-center bg-white shadow">
            <svg viewBox="0 0 12 18" className="mr-auto h-[18px] w-3">
              <path d="M12 0v18L1 9z" fill="#757575" />
            </svg>
          </button>
        </section>
      </main>

      <footer className="border border-[#707070] bg-[#3a469c] pt-[123px] pr-[92px] pb-[144px] font-['Open_Sans','DejaVu_Sans_Condensed','DejaVu_Sans',sans-serif] text-[52px] leading-[77px] font-bold text-[#cbc9e6]">
        <p>اتصل بنا</p>
        <p className="mb-[77px]">وزارة السياحة و الأثار</p>
        <p className="mb-[77px]">الدوار الثالث جبل عمــان</p>
        <p>
          تلفون :<bdi dir="ltr" className="text-[58px] leading-none">+962 6 4603360</bdi>
        </p>
        <p>.حقوق التأليف والنشر 2014 من قبل وزارة السياحة والآثار</p>
      </footer>
    </div>
  );
}
